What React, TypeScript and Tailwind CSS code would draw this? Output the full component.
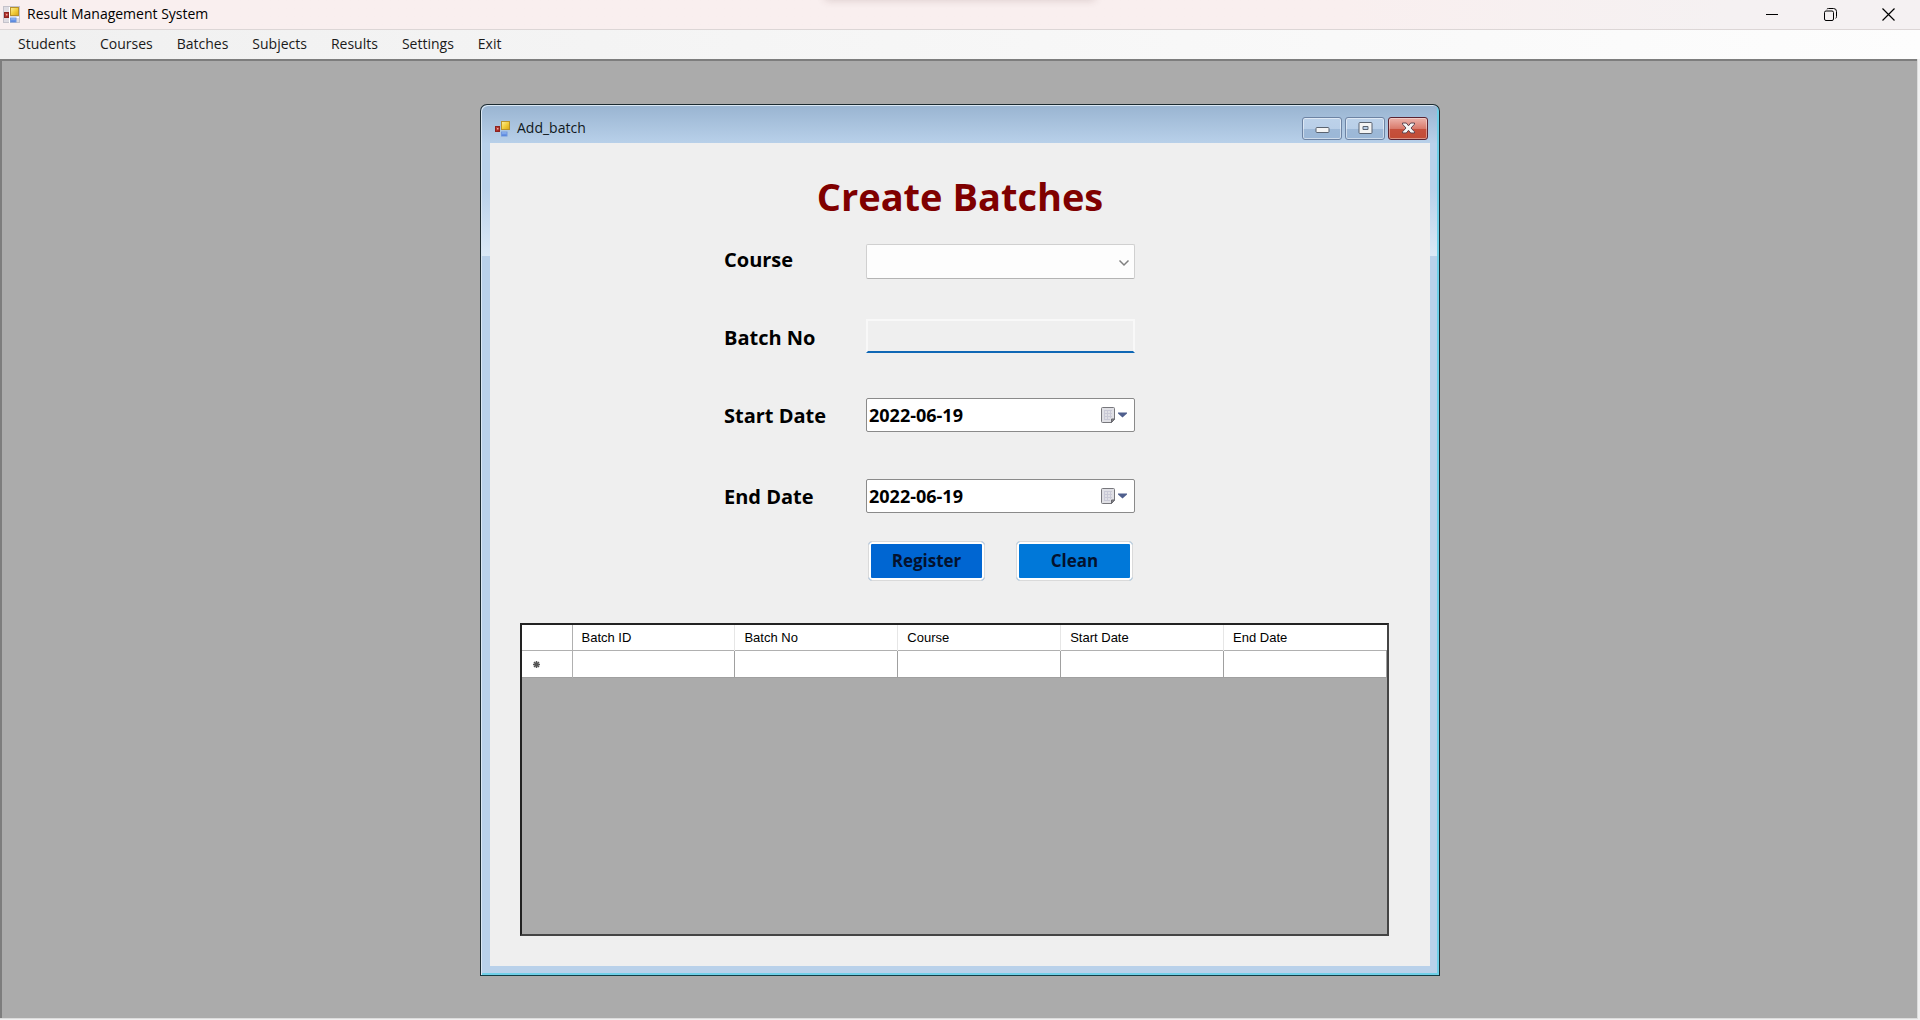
import { useState } from 'react';
import type { ReactNode } from 'react';

const menuItems = ['Students', 'Courses', 'Batches', 'Subjects', 'Results', 'Settings', 'Exit'];
const columns = ['Batch ID', 'Batch No', 'Course', 'Start Date', 'End Date'];

function FormIcon({ boxed }: { boxed?: boolean }) {
  return (
    <svg width="17" height="17" viewBox="0 0 17 17" aria-hidden="true" className="shrink-0">
      <defs>
        <linearGradient id="yellowTile" x1="0" y1="0" x2="1" y2="1">
          <stop offset="0" stopColor="#fdf0a0" />
          <stop offset="0.5" stopColor="#f2cf3e" />
          <stop offset="1" stopColor="#d9a514" />
        </linearGradient>
        <linearGradient id="redTile" x1="0" y1="0" x2="1" y2="1">
          <stop offset="0" stopColor="#c94a42" />
          <stop offset="1" stopColor="#9c1c17" />
        </linearGradient>
        <linearGradient id="blueTile" x1="0" y1="0" x2="0" y2="1">
          <stop offset="0" stopColor="#a9c8fa" />
          <stop offset="1" stopColor="#3f72d8" />
        </linearGradient>
      </defs>
      {boxed && <rect x="0.5" y="0.5" width="16" height="16" fill="#dedce2" stroke="#c4c2ca" />}
      {boxed && <path d="M6.5 1v16M1 11.5h15" stroke="#fff" />}
      <rect x="7.5" y="1.5" width="8" height="8" fill="url(#yellowTile)" stroke="#b8922a" />
      <rect x="1.5" y="6.5" width="4" height="5" fill="url(#redTile)" stroke="#8c2420" />
      <rect x="3" y="8" width="1.5" height="1.5" fill="#f0a8a0" />
      <rect x="7.5" y="12" width="5.5" height="4" fill="url(#blueTile)" stroke="#6f97de" />
    </svg>
  );
}

function TitleBar() {
  return (
    <header className="relative flex h-[30px] shrink-0 items-center justify-between overflow-hidden border-b border-[#dcd6d6] bg-linear-to-r from-[#f9efef] from-70% to-[#f5f1f2] to-90%">
      <div className="absolute -top-3 left-1/2 h-3 w-[270px] -translate-x-1/2 shadow-[0_0_8px_rgba(90,50,50,0.2)]" />
      <div className="flex items-center gap-[7px] pb-px pl-[3px]">
        <FormIcon boxed />
        <h1 className="text-[14px] leading-5 text-black">Result Management System</h1>
      </div>
      <div className="flex h-full pr-[3px] pb-px text-black">
        <button aria-label="Minimize" className="flex w-[58px] items-center justify-center">
          <svg width="13" height="13" viewBox="0 0 13 13" stroke="currentColor" fill="none">
            <path d="M0 6.5h12" />
          </svg>
        </button>
        <button aria-label="Restore" className="flex w-[58px] items-center justify-center">
          <svg width="13" height="13" viewBox="0 0 13 13" stroke="currentColor" fill="none">
            <rect x="0.5" y="3" width="9" height="9.5" rx="1.5" />
            <path d="M2.8 1.2C3.3.7 3.8.5 4.5.5H9.500a3 3 0 0 1 3 3v5c0 .8-.3 1.500-.8 1.900" />
          </svg>
        </button>
        <button aria-label="Close" className="flex w-[58px] items-center justify-center">
          <svg width="13" height="13" viewBox="0 0 13 13" stroke="currentColor" strokeWidth="1.2" fill="none">
            <path d="M0.500 0.500l12 12M12.500 0.500l-12 12" />
          </svg>
        </button>
      </div>
    </header>
  );
}

function CaptionButton({ label, danger, children }: { label: string; danger?: boolean; children: ReactNode }) {
  return (
    <button
      aria-label={label}
      className={
        danger
          ? 'flex h-[23px] w-10 items-center justify-center rounded-[3px] border border-[#5b2331] bg-linear-to-b from-[#e9a9a0] from-10% via-[#d97a6c] via-50% to-[#d0705a] shadow-[inset_0_0_0_1px_rgba(255,255,255,0.4),inset_0_-11px_0_-1px_rgba(180,40,15,0.5)]'
          : 'flex h-[23px] w-10 items-center justify-center rounded-[3px] border border-[#6d83a3] bg-linear-to-b from-[#bdd2ea] to-[#b4cbe6] shadow-[inset_0_0_0_1px_rgba(255,255,255,0.5),inset_0_-11px_0_-1px_rgba(110,145,185,0.35)]'
      }
    >
      {children}
    </button>
  );
}

function ChildTitleBar() {
  return (
    <div className="flex h-[37px] shrink-0 items-center justify-between pr-[10px] pl-3">
      <div className="flex items-center gap-[6px] pt-[7px]">
        <FormIcon />
        <h2 className="text-[14px] leading-5 text-[#101820]">Add_batch</h2>
      </div>
      <div className="flex gap-[3px] pt-[7px]">
        <CaptionButton label="Minimize child window">
          <svg width="15" height="13" viewBox="0 0 15 13">
            <rect x="1" y="5.500" width="13" height="5" rx="1" fill="#f4f4f4" stroke="#5a6370" />
          </svg>
        </CaptionButton>
        <CaptionButton label="Maximize child window">
          <svg width="15" height="13" viewBox="0 0 15 13">
            <path fillRule="evenodd" d="M2 .5h11a1 1 0 0 1 1 1v9a1 1 0 0 1-1 1H2a1 1 0 0 1-1-1v-9a1 1 0 0 1 1-1zM5 4.500v3h5v-3z" fill="#f4f4f4" stroke="#5a6370" />
          </svg>
        </CaptionButton>
        <CaptionButton label="Close child window" danger>
          <svg width="15" height="13" viewBox="0 0 15 13">
            <path d="M1.500 1h3.800l2.200 2.800L9.700 1h3.800v1.200L10 6l3.500 3.800V11H9.700L7.500 8.300 5.300 11H1.500V9.800L5 6 1.500 2.200z" fill="#f6f6f6" stroke="#5e4550" />
          </svg>
        </CaptionButton>
      </div>
    </div>
  );
}

function DateField({ id, value, onChange }: { id: string; value: string; onChange: (v: string) => void }) {
  return (
    <div className="flex h-[34px] items-center rounded-[2px] border border-[#8a8a8a] bg-white pr-[7px]">
      <input
        id={id}
        type="text"
        value={value}
        onChange={(e) => onChange(e.target.value)}
        className="h-full min-w-0 flex-1 bg-transparent pl-[2px] text-[18px] font-bold text-black outline-none"
      />
      <button aria-label="Open calendar" className="flex items-center gap-[2px]">
        <svg width="15" height="17" viewBox="0 0 15 17">
          <path d="M1.500.5h11a1 1 0 0 1 1 1v10.500l-3 3.500H1.500a1 1 0 0 1-1-1v-13a1 1 0 0 1 1-1z" fill="#e0e0e5" stroke="#77777c" />
          <path d="M3 3.500h8M3 6.500h8M3 9.500h8M3 12.500h6M3.500 3v10M6.500 3v10M9.500 3v8" stroke="#c9c9d6" />
          <path d="M13.500 12h-3v3.500z" fill="#8b8b90" stroke="#66666c" strokeLinejoin="round" />
        </svg>
        <svg width="9" height="7" viewBox="0 0 9 7">
          <path d="M0 .500h9v1L4.500 5.500 0 1.500z" fill="#4f5f8d" />
        </svg>
      </button>
    </div>
  );
}

const labelClass = 'col-start-2 text-[20px] leading-7 font-bold text-black';

function BatchForm() {
  const [course, setCourse] = useState('');
  const [batchNo, setBatchNo] = useState('');
  const [start, setStart] = useState('2022-06-19');
  const [end, setEnd] = useState('2022-06-19');
  const clean = () => {
    setCourse('');
    setBatchNo('');
  };
  return (
    <form
      onSubmit={(e) => e.preventDefault()}
      className="grid shrink-0 grid-cols-[minmax(0,234fr)_142px_269px_minmax(0,295fr)] items-center"
    >
      <h3 className="col-span-4 pt-[26px] pb-5 text-center text-[38px] leading-[55px] font-bold text-[#7f0000]">
        Create Batches
      </h3>

      <label htmlFor="course" className={`${labelClass} mb-1`}>
        Course
      </label>
      <div className="relative">
        <select
          id="course"
          value={course}
          onChange={(e) => setCourse(e.target.value)}
          className="block h-[35px] w-full appearance-none rounded-[2px] border border-[#d0d0d0] border-b-[#b4b4b4] bg-[#fdfdfd] px-2 text-[18px] outline-none"
        >
          <option value="" />
        </select>
        <svg width="12" height="8" viewBox="0 0 12 8" className="pointer-events-none absolute top-[15px] right-[5px]">
          <path d="M1.500 1.500l4.500 4.500 4.500-4.500" fill="none" stroke="#808080" strokeWidth="1.500" />
        </svg>
      </div>

      <label htmlFor="batchNo" className={`${labelClass} mt-11`}>
        Batch No
      </label>
      <input
        id="batchNo"
        value={batchNo}
        onChange={(e) => setBatchNo(e.target.value)}
        className="mt-10 h-[34px] w-full border-2 border-[#f8f8f8] border-b-[#0f67b5] bg-[#efefef] px-2 text-[18px] outline-none"
      />

      <label htmlFor="startDate" className={`${labelClass} mt-[46px]`}>
        Start Date
      </label>
      <div className="mt-[45px]">
        <DateField id="startDate" value={start} onChange={setStart} />
      </div>

      <label htmlFor="endDate" className={`${labelClass} mt-12`}>
        End Date
      </label>
      <div className="mt-[47px]">
        <DateField id="endDate" value={end} onChange={setEnd} />
      </div>

      <div className="col-start-3 mt-7 flex justify-between px-[2px]">
        <button
          type="submit"
          className="h-10 w-[117px] rounded-[4px] border border-[#dadada] bg-[#0066d2] text-[17px] leading-6 font-bold text-[#04122e] shadow-[inset_0_0_0_2px_#fff]"
        >
          Register
        </button>
        <button
          type="button"
          onClick={clean}
          className="h-10 w-[117px] rounded-[4px] border border-[#dadada] bg-[#0078d9] text-[17px] leading-6 font-bold text-[#04122e] shadow-[inset_0_0_0_2px_#fff]"
        >
          Clean
        </button>
      </div>
    </form>
  );
}

function BatchTable() {
  return (
    <div className="mt-[42px] mr-[41px] mb-[30px] ml-[30px] min-h-[120px] flex-1 border-2 border-[#444] border-t-[#222] border-l-[#222] bg-[#ababab]">
      <table className="w-full table-fixed border-collapse bg-white font-['Liberation_Sans',sans-serif] text-[13px] text-black">
        <thead>
          <tr className="h-[25px] border-b border-[#b0b0b0]">
            <th aria-label="Row state" className="w-[50px] border-r border-[#b0b0b0]" />
            {columns.map((c) => (
              <th key={c} scope="col" className="border-r border-[#e6e6e6] pl-[9px] text-left font-normal last:border-r-0">
                {c}
              </th>
            ))}
          </tr>
        </thead>
        <tbody>
          <tr className="h-[27px] border-b border-[#a0a0a0]">
            <th scope="row" aria-label="New row" className="border-r border-[#b0b0b0]">
              <svg width="9" height="9" viewBox="0 0 9 9" className="mt-[2px] ml-[10px]">
                <path d="M4.500 1v7M1 4.500h7M2 2l5 5M7 2l-5 5" stroke="#555" strokeWidth="1.500" />
              </svg>
            </th>
            {columns.map((c) => (
              <td key={c} className="border-r border-[#a0a0a0]" />
            ))}
          </tr>
        </tbody>
      </table>
    </div>
  );
}

function ChildWindow() {
  return (
    <section className="mx-auto flex w-1/2 flex-1 flex-col rounded-t-[7px] border border-[#1c2a30] border-b-[#143c44] bg-[#b9d1ea] bg-linear-to-b from-[#99b4d1] to-[#b9d1ea] to-[39px] p-px shadow-[inset_1px_1px_0_#dbe8f4,inset_-2px_-2px_0_#6fd0e8]">
      <ChildTitleBar />
      <div className="flex flex-1">
        <div className="w-2 bg-linear-to-b from-[#b9d1ea] from-40% to-[#dbe9f6] bg-[length:100%_113px] bg-no-repeat" />
        <div className="flex min-w-0 flex-1 flex-col bg-[#efefef]">
          <BatchForm />
          <BatchTable />
        </div>
        <div className="mr-px w-[7px] bg-linear-to-b from-[#b9d1ea] from-40% to-[#dbe9f6] bg-[length:100%_113px] bg-no-repeat" />
      </div>
      <div className="h-2" />
    </section>
  );
}

export default function App() {
  return (
    <div className="flex min-h-screen flex-col bg-[#f0f0f0] font-['Open_Sans',sans-serif]">
      <TitleBar />
      <nav className="flex h-[29px] shrink-0 items-center gap-6 bg-linear-to-r from-[#f0f0f0] to-[#fdfdfd] pb-[2px] pl-[18px] text-[14px] leading-5 text-[#1a1a1a]">
        {menuItems.map((m) => (
          <button key={m}>{m}</button>
        ))}
      </nav>
      <main className="flex flex-1 flex-col bg-[#ababab] pt-[45px] pb-[44px] shadow-[inset_-2px_-1px_0_#f0f0f0,inset_-3px_-2px_0_#dcdcdc,inset_2px_2px_0_#7d7d7d]">
        <ChildWindow />
      </main>
    </div>
  );
}
